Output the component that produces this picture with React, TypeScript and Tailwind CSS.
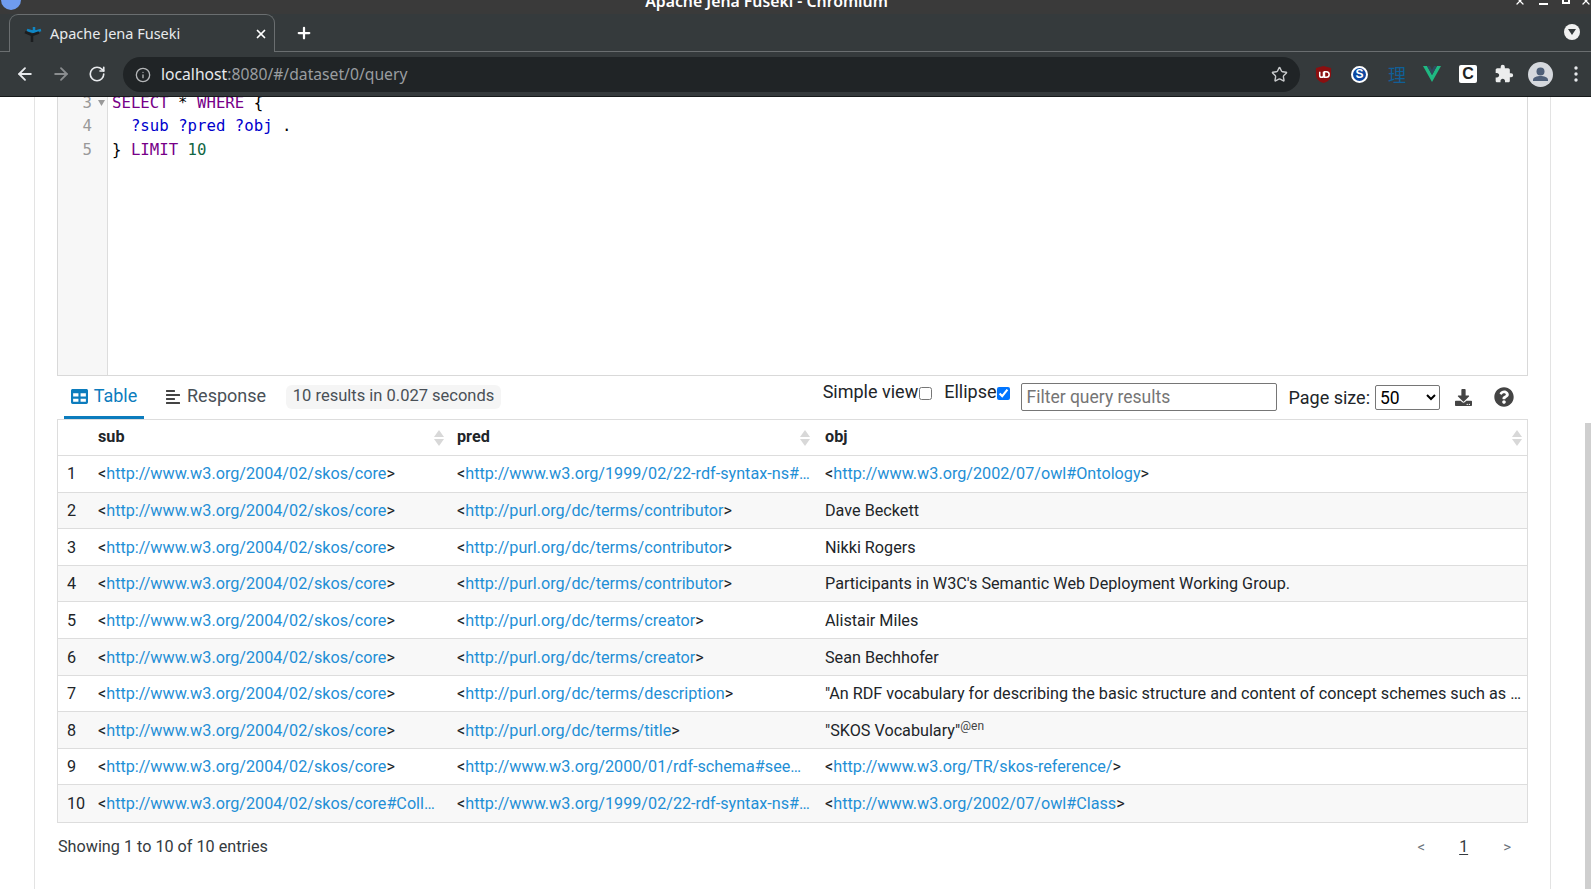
import React from "react";
import { FaTable, FaAlignLeft, FaDownload, FaQuestionCircle } from "react-icons/fa";
import { MdExtension } from "react-icons/md";
import { ArrowLeft, ArrowRight, RotateCw, Info, Star, X, Plus } from "lucide-react";

const S = "http://www.w3.org/2004/02/skos/core";
type Cell = { link?: string; text?: string; lang?: string };
const rows: { sub: string; pred: string; obj: Cell }[] = [
  { sub: S, pred: "http://www.w3.org/1999/02/22-rdf-syntax-ns#…", obj: { link: "http://www.w3.org/2002/07/owl#Ontology" } },
  { sub: S, pred: "http://purl.org/dc/terms/contributor", obj: { text: "Dave Beckett" } },
  { sub: S, pred: "http://purl.org/dc/terms/contributor", obj: { text: "Nikki Rogers" } },
  { sub: S, pred: "http://purl.org/dc/terms/contributor", obj: { text: "Participants in W3C's Semantic Web Deployment Working Group." } },
  { sub: S, pred: "http://purl.org/dc/terms/creator", obj: { text: "Alistair Miles" } },
  { sub: S, pred: "http://purl.org/dc/terms/creator", obj: { text: "Sean Bechhofer" } },
  { sub: S, pred: "http://purl.org/dc/terms/description", obj: { text: "\"An RDF vocabulary for describing the basic structure and content of concept schemes such as …" } },
  { sub: S, pred: "http://purl.org/dc/terms/title", obj: { text: "\"SKOS Vocabulary\"", lang: "@en" } },
  { sub: S, pred: "http://www.w3.org/2000/01/rdf-schema#see…", obj: { link: "http://www.w3.org/TR/skos-reference/" } },
  { sub: "http://www.w3.org/2004/02/skos/core#Coll…", pred: "http://www.w3.org/1999/02/22-rdf-syntax-ns#…", obj: { link: "http://www.w3.org/2002/07/owl#Class" } },
];

function Uri({ href }: { href: string }) {
  const ell = href.endsWith("…");
  return (
    <span className="whitespace-nowrap">
      &lt;<span className="text-[#1f8fd6]">{href}</span>
      {ell ? "" : ">"}
    </span>
  );
}

function Sort() {
  return (
    <svg width="10" height="16" viewBox="0 0 10 16" className="shrink-0">
      <path d="M5 0 L10 7 L0 7 Z" fill="#d8d8d8" />
      <path d="M5 16 L10 9 L0 9 Z" fill="#d8d8d8" />
    </svg>
  );
}

function HeadCell({ label, w }: { label: string; w: string }) {
  return (
    <div className={`${w} h-full flex items-center justify-between font-bold`}>
      <span>{label}</span>
      <Sort />
    </div>
  );
}

function Chrome() {
  return (
    <div className="h-[97px] shrink-0 flex flex-col bg-[#353a3c] border-b border-[#16191a] font-['Noto_Sans',sans-serif]">
      <div className="relative h-[14px] bg-[#3a3a3a] overflow-hidden shrink-0">
        <div className="absolute left-[1px] top-[-10px] w-[20px] h-[20px] rounded-full bg-[#6f9cf0]" />
        <div className="absolute left-0 right-0 top-[-11px] text-center text-[15.8px] leading-[24px] font-semibold text-white pr-[60px] pl-[2px]">
          Apache Jena Fuseki - Chromium
        </div>
        <X className="absolute left-[1514px] top-[-5px] text-white" size={12} strokeWidth={2.5} />
        <div className="absolute left-[1539px] top-[3px] w-[9px] h-[2px] bg-white" />
        <div className="absolute left-[1562px] top-[-4px] w-[8px] h-[8px] border-2 border-white" />
        <X className="absolute left-[1580px] top-[-5px] text-white" size={12} strokeWidth={2.5} />
      </div>
      <div className="h-[38px] shrink-0 flex items-end bg-[#353a3c] border-b border-[#6a6e70] pl-[9px] relative">
        <div className="w-[266px] h-[38px] mb-[-1px] bg-[#353a3c] border border-b-0 border-[#6a6e70] rounded-t-[9px] flex items-center pl-[14px] pr-[6px] gap-[6px]">
          <svg width="20" height="18" viewBox="0 0 20 18" className="shrink-0">
            <path d="M10 2 V7 M10 7 L3 5 M10 7 L17 5" stroke="#0f86c4" strokeWidth="2.5" fill="none" />
            <path d="M8 10 V17 M8 10 L1 7 M8 10 L15 7.5" stroke="#1b1d1f" strokeWidth="2.5" fill="none" />
          </svg>
          <span className="text-[14.5px] text-[#e8eaed] flex-1">Apache Jena Fuseki</span>
          <X size={14} strokeWidth={3} className="text-white" />
        </div>
        <Plus size={18} strokeWidth={3} className="text-white ml-[20px] mb-[9px]" />
        <div className="absolute right-[11px] top-[10px] w-[16px] h-[16px] rounded-full bg-[#f1f1f1] flex items-center justify-center">
          <svg width="8" height="6" viewBox="0 0 8 6"><path d="M0 0H8L4 6Z" fill="#353a3c" /></svg>
        </div>
      </div>
      <div className="flex-1 flex items-center pl-[15px] pr-[8px]">
        <ArrowLeft size={20} strokeWidth={2.2} className="text-[#e8eaed]" />
        <ArrowRight size={20} strokeWidth={2.2} className="text-[#8a8d8f] ml-[16px]" />
        <RotateCw size={18} strokeWidth={2.2} className="text-[#e8eaed] ml-[17px]" />
        <div className="ml-[17px] mt-[1px] w-[1177px] h-[35px] rounded-full bg-[#202426] flex items-center pl-[12px] pr-[12px]">
          <Info size={16} className="text-[#b4b6b8]" />
          <span className="ml-[10px] text-[15.7px] text-[#e8eaed]">localhost<span className="text-[#9a9da0]">:8080/#/dataset/0/query</span></span>
          <Star size={17} className="ml-auto text-[#c8cacc]" />
        </div>
        <div className="flex items-center ml-[15px]">
          <svg width="17" height="19" viewBox="0 0 18 20" className="shrink-0">
            <path d="M9 1 L17 3 V10 C17 15 13 18 9 19 C5 18 1 15 1 10 V3 Z" fill="#8b0f10" />
            <path d="M5 7v4a2 2 0 0 0 4 0V7M10 7h2a2.5 2.5 0 0 1 0 6h-2Z" stroke="#fff" strokeWidth="1.6" fill="none" />
          </svg>
          <div className="ml-[19px] w-[17px] h-[17px] rounded-full bg-[#0c47a1] border-2 border-white flex items-center justify-center text-white text-[12px] font-bold font-['Liberation_Sans',sans-serif]">S</div>
          <span className="ml-[20px] text-[#115f97] text-[18px] leading-none font-['Noto_Sans_CJK_SC',sans-serif]">理</span>
          <svg width="18" height="16" viewBox="0 0 18 16" className="ml-[17px]">
            <path d="M0 0H4L9 9L14 0H18L9 16Z" fill="#1fb982" />
            <path d="M4 0H7L9 4L11 0H14L9 9Z" fill="#2f4a5e" />
          </svg>
          <div className="ml-[18px] w-[18px] h-[18px] bg-white rounded-[2px] flex items-center justify-center text-[#222] text-[16px] font-bold font-['Liberation_Sans',sans-serif]">C</div>
          <MdExtension size={20} className="ml-[17px] text-[#eceded]" />
          <div className="ml-[14px] w-[25px] h-[25px] rounded-full bg-[#d5d8dd] overflow-hidden flex items-center justify-center">
            <svg width="25" height="25" viewBox="0 0 25 25">
              <circle cx="12.5" cy="9.5" r="4" fill="#4e5f78" />
              <path d="M5 18c0-3 4-4 7.5-4s7.5 1 7.5 4v1H5Z" fill="#4e5f78" />
            </svg>
          </div>
          <svg width="4" height="16" viewBox="0 0 4 16" className="ml-[21px]">
            <circle cx="2" cy="2" r="1.7" fill="#e8eaed" /><circle cx="2" cy="8" r="1.7" fill="#e8eaed" /><circle cx="2" cy="14" r="1.7" fill="#e8eaed" />
          </svg>
        </div>
      </div>
    </div>
  );
}

const K = "text-[#770088]";
const V = "text-[#0000cc]";

function Editor() {
  return (
    <div className="h-[279px] shrink-0 flex border-x border-b border-[#d9d9d9] overflow-hidden">
      <div className="w-[50px] shrink-0 bg-[#f7f7f7] border-r border-[#dddddd] text-[#999] text-right font-['DejaVu_Sans_Mono',monospace] text-[15.7px] leading-[23.4px] pr-[15px]">
        <div className="mt-[-6px]">3</div>
        <div>4</div>
        <div>5</div>
      </div>
      <div className="relative w-0">
        <svg width="7" height="6" viewBox="0 0 7 6" className="absolute left-[-10px] top-[3px]"><path d="M0 0H7L3.5 6Z" fill="#999" /></svg>
      </div>
      <div className="pl-[4px] font-['DejaVu_Sans_Mono',monospace] text-[15.7px] leading-[23.4px] whitespace-pre text-black">
        <div className="mt-[-6px]"><span className={K}>SELECT</span> * <span className={K}>WHERE</span> {"{"}</div>
        <div>  <span className={V}>?sub</span> <span className={V}>?pred</span> <span className={V}>?obj</span> .</div>
        <div>{"}"} <span className={K}>LIMIT</span> <span className="text-[#116644]">10</span></div>
      </div>
    </div>
  );
}

function Toolbar() {
  return (
    <div className="h-[43px] shrink-0 flex items-start text-[18px] text-[#495057]">
      <div className="h-[43px] w-[80px] ml-[7px] pt-[6px] border-b-[3px] border-[#0c7cbd] flex items-start justify-center gap-[6px] text-[#0c7cbd]">
        <FaTable size={17} className="mt-[6px]" />
        <span>Table</span>
      </div>
      <div className="ml-[21px] pt-[6px] flex items-start gap-[6px]">
        <FaAlignLeft size={16} className="mt-[7px] text-[#444]" />
        <span>Response</span>
      </div>
      <div className="ml-[20px] mt-[9px] h-[24px] w-[215px] rounded-[6px] bg-[#f5f5f5] text-[16.5px] leading-[22px] text-center">10 results in 0.027 seconds</div>
      <div className="ml-auto flex items-start text-[#212529]">
        <span className="mt-[2px]">Simple view</span>
        <input type="checkbox" className="mt-[11px] ml-[1px] w-[13px] h-[13px]" />
        <span className="ml-[12px] mt-[2px]">Ellipse</span>
        <input type="checkbox" defaultChecked className="mt-[11px] ml-[1px] w-[13px] h-[13px] accent-[#0075ff]" />
        <input placeholder="Filter query results" className="ml-[11px] mt-[7px] w-[256px] h-[28px] border border-[#767676] rounded-[2px] px-[4px] text-[17.5px] placeholder:text-[#757575]" />
        <span className="ml-[11px] mt-[8px]">Page size:</span>
        <select defaultValue="50" className="ml-[5px] mt-[9px] w-[65px] h-[25px] border border-[#767676] rounded-[2px] text-[17.5px] text-black bg-white">
          <option>50</option>
        </select>
        <FaDownload size={17} className="ml-[15px] mt-[13px] text-[#444]" />
        <FaQuestionCircle size={20} className="ml-[22px] mr-[14px] mt-[11px] text-[#444]" />
      </div>
    </div>
  );
}

function ResultTable() {
  return (
    <div className="border border-[#dddddd] text-[16.2px] text-[#212529] font-['Roboto',sans-serif]">
      <div className="h-[36px] flex items-center border-b border-[#dddddd] pl-[40px] pr-[5px]">
        <HeadCell label="sub" w="w-[359px] pr-[13px]" />
        <HeadCell label="pred" w="w-[368px] pr-[15px]" />
        <HeadCell label="obj" w="flex-1" />
      </div>
      {rows.map((r, i) => (
        <div key={i} className={`h-[36.6px] flex items-center ${i > 0 ? "pt-[2px]" : ""} ${i < rows.length - 1 ? "border-b border-[#dddddd]" : ""} ${i % 2 ? "bg-[#f8f8f8]" : "bg-white"}`}>
          <div className="w-[40px] pl-[9px]">{i + 1}</div>
          <div className="w-[359px] overflow-hidden"><Uri href={r.sub} /></div>
          <div className="w-[368px] overflow-hidden"><Uri href={r.pred} /></div>
          <div className="flex-1 whitespace-nowrap overflow-hidden">
            {r.obj.link ? <Uri href={r.obj.link} /> : r.obj.text}
            {r.obj.lang ? <sup className="text-[12px] text-[#444]">{r.obj.lang}</sup> : null}
          </div>
        </div>
      ))}
    </div>
  );
}

export default function App() {
  return (
    <div className="relative h-[889px] overflow-hidden bg-white flex flex-col font-['Roboto',sans-serif]">
      <Chrome />
      <div className="flex-1 ml-[34px] w-[1517px] border-x border-[#e3e3e3] px-[22px] flex flex-col overflow-hidden">
        <Editor />
        <Toolbar />
        <ResultTable />
        <div className="flex items-center justify-between mt-[12px] pl-[1px] text-[16.2px] text-[#343a40]">
          <span>Showing 1 to 10 of 10 entries</span>
          <div className="flex items-center text-[#6c757d] text-[15px] pr-[17px]">
            <span>&lt;</span>
            <span className="ml-[34px] text-[#343a40] underline underline-offset-2 text-[16px]">1</span>
            <span className="ml-[35px]">&gt;</span>
          </div>
        </div>
      </div>
      <div className="absolute right-0 top-[97px] bottom-0 w-[6px] flex flex-col justify-end">
        <div className="h-[466px] bg-[#cfcfcf]" />
      </div>
    </div>
  );
}
